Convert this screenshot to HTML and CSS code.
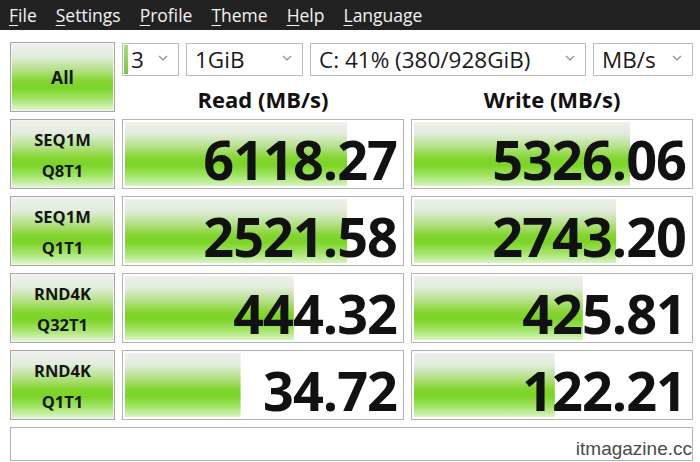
FILE: index.html
```html
<!DOCTYPE html>
<html lang="en">

<head>
    <meta charset="UTF-8">
    <meta name="viewport" content="width=device-width, initial-scale=1.0">
    <title>CrystalDiskMark</title>
    <link rel="stylesheet" href="styles.css">
</head>

<body>
    <div class="menubar">
        <span class="menu-item"><u>F</u>ile</span>
        <span class="menu-item"><u>S</u>ettings</span>
        <span class="menu-item"><u>P</u>rofile</span>
        <span class="menu-item"><u>T</u>heme</span>
        <span class="menu-item"><u>H</u>elp</span>
        <span class="menu-item"><u>L</u>anguage</span>
    </div>

    <div class="board">
        <button class="test-button all-button">All</button>

        <div class="controls">
            <div class="selects">
                <div class="select select-count">
                    <span class="count-bar"></span>
                    <span class="select-value">3</span>
                    <svg class="chevron" width="10" height="6" viewBox="0 0 10 6"><polyline points="1,1 5,5 9,1" /></svg>
                </div>
                <div class="select select-size">
                    <span class="select-value">1GiB</span>
                    <svg class="chevron" width="10" height="6" viewBox="0 0 10 6"><polyline points="1,1 5,5 9,1" /></svg>
                </div>
                <div class="select select-drive">
                    <span class="select-value">C: 41% (380/928GiB)</span>
                    <svg class="chevron" width="10" height="6" viewBox="0 0 10 6"><polyline points="1,1 5,5 9,1" /></svg>
                </div>
                <div class="select select-unit">
                    <span class="select-value">MB/s</span>
                    <svg class="chevron" width="10" height="6" viewBox="0 0 10 6"><polyline points="1,1 5,5 9,1" /></svg>
                </div>
            </div>
            <div class="headings">
                <div class="heading">Read (MB/s)</div>
                <div class="heading">Write (MB/s)</div>
            </div>
        </div>

        <!-- SEQ1M Q8T1 -->
        <button class="test-button">SEQ1M<br>Q8T1</button>
        <div class="result" style="--fill: 80%">6118.27</div>
        <div class="result" style="--fill: 78%">5326.06</div>

        <!-- SEQ1M Q1T1 -->
        <button class="test-button">SEQ1M<br>Q1T1</button>
        <div class="result" style="--fill: 80%">2521.58</div>
        <div class="result" style="--fill: 73%">2743.20</div>

        <!-- RND4K Q32T1 -->
        <button class="test-button">RND4K<br>Q32T1</button>
        <div class="result" style="--fill: 61%">444.32</div>
        <div class="result" style="--fill: 61%">425.81</div>

        <!-- RND4K Q1T1 -->
        <button class="test-button">RND4K<br>Q1T1</button>
        <div class="result" style="--fill: 42%">34.72</div>
        <div class="result" style="--fill: 51%">122.21</div>

        <div class="comment">
            <span class="watermark">itmagazine.cc</span>
        </div>
    </div>
</body>

</html>
```

FILE: styles.css
```css
:root {
    --menu-bg: #222222;
    --menu-text: #f2f2f2;
    --border-color: #b4b4b4;
    --text-color: #111111;
    --bar-gradient: linear-gradient(to bottom,
            #f0f1ef 0%,
            #e2ecdc 20%,
            #b3e083 40%,
            #84d531 56%,
            #7bd426 66%,
            #a2e466 82%,
            #e4f6d6 100%);
}

* {
    box-sizing: border-box;
}

body {
    margin: 0;
    padding: 0;
    background-color: #ffffff;
    color: var(--text-color);
    font-family: 'Open Sans', 'Noto Sans', sans-serif;
}

.menubar {
    height: 30px;
    background-color: var(--menu-bg);
    color: var(--menu-text);
    display: flex;
    align-items: center;
    font-size: 17.5px;
}

.menu-item {
    padding: 0 10px 0 9px;
    line-height: 30px;
}

.menu-item u {
    text-underline-offset: 3px;
    text-decoration-thickness: 1px;
}

.board {
    display: grid;
    grid-template-columns: 105px 282px 282px;
    grid-template-rows: 70px repeat(4, 70px) 34px;
    gap: 7px;
    padding: 12px 0 0 10px;
}

.test-button {
    font-family: inherit;
    font-weight: 700;
    font-size: 16.5px;
    line-height: 31px;
    color: #151515;
    border: 1px solid #a6a6a6;
    box-shadow: inset 0 0 0 1px #f4f4f4;
    background: var(--bar-gradient);
    padding: 1px 0 0;
    cursor: pointer;
}

.all-button {
    font-size: 17.5px;
}

.controls {
    grid-column: 2 / 4;
    display: flex;
    flex-direction: column;
}

.selects {
    display: flex;
    gap: 7px;
    height: 35px;
    margin-top: 1px;
}

.select {
    display: flex;
    align-items: center;
    border: 1px solid #bcbcbc;
    background-color: #ffffff;
    padding: 0 10px 0 8px;
    font-size: 22.5px;
    color: #1a1a1a;
}

.select-value {
    flex: 1;
    white-space: nowrap;
}

.chevron {
    fill: none;
    stroke: #8a8a8a;
    stroke-width: 1.1;
    margin-top: -4px;
}

.select-count {
    width: 57px;
    padding-left: 1px;
}

.count-bar {
    width: 4px;
    align-self: stretch;
    margin: 1px 3px 1px 0;
    background: linear-gradient(to bottom, #a6df75, #79c83a);
}

.select-size {
    width: 117px;
}

.select-drive {
    width: 276px;
}

.select-unit {
    width: 100px;
}

.headings {
    display: grid;
    grid-template-columns: 282px 282px;
    gap: 7px;
    flex: 1;
}

.heading {
    text-align: center;
    font-weight: 700;
    font-size: 22px;
    line-height: 30px;
    padding-top: 8px;
}

.result {
    display: flex;
    align-items: center;
    justify-content: flex-end;
    border: 1px solid var(--border-color);
    background: var(--bar-gradient) no-repeat;
    background-size: var(--fill) 100%;
    box-shadow: inset 0 0 0 2px #ffffff;
    padding: 10px 6px 0 0;
    font-weight: 700;
    font-size: 54px;
    letter-spacing: -1px;
    line-height: 54px;
}

.comment {
    grid-column: 1 / 4;
    border: 1px solid var(--border-color);
    display: flex;
    justify-content: flex-end;
    align-items: flex-end;
}

.watermark {
    font-family: 'Liberation Sans', Arial, sans-serif;
    font-size: 19px;
    line-height: 19px;
    color: #4a4a4a;
    text-shadow: 0 0 2px #ffffff;
    margin-bottom: 2px;
}
```
